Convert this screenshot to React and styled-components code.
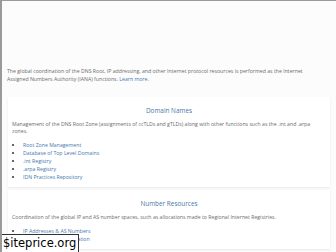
import React from "react";
import styled, { createGlobalStyle } from "styled-components";

const GlobalStyle = createGlobalStyle`
  html, body {
    margin: 0;
    padding: 0;
    background: #fafafa;
  }
  body {
    font-family: "Open Sans", "Liberation Sans", sans-serif;
    color: #6b6b6b;
  }
`;

const Frame = styled.div`
  width: 336px;
  height: 252px;
  box-sizing: border-box;
  border-top: 1px solid #9a9a9a;
  border-left: 2px solid #9a9a9a;
  overflow: hidden;
  position: relative;
  background: #fcfcfc;
`;

const Intro = styled.p`
  margin: 66px 0 0 5px;
  font-size: 5.2px;
  line-height: 8.4px;
  width: 312px;
`;

const Link = styled.a`
  color: #3f78b0;
  text-decoration: none;
`;

const Cards = styled.div`
  margin: 13px 6px 0 6px;
  display: flex;
  flex-direction: column;
  gap: 3px;
`;

const Card = styled.section`
  background: #fff;
  box-shadow: 0 1px 2px rgba(0, 0, 0, 0.08);
  padding: 9px 4px 6px 4px;
`;

const Heading = styled.h2`
  margin: 0 0 6px 0;
  text-align: center;
  font-weight: 400;
  font-size: 6.4px;
  line-height: 9px;
  color: #4a78a8;
`;

const Text = styled.p`
  margin: 0 0 5px 0;
  font-size: 5.2px;
  line-height: 7.6px;
`;

const List = styled.ul`
  margin: 0;
  padding: 0 0 0 11px;
  font-size: 5.2px;
  line-height: 8px;
  li::marker {
    color: #333;
  }
`;

const Item = styled.li`
  color: #3f78b0;
`;

const Badge = styled.div`
  position: absolute;
  left: 0;
  bottom: 0;
  background: #fff;
  border: 1px solid #333;
  border-left: none;
  border-bottom: none;
  padding: 0 2px 0 1px;
  font-family: "DejaVu Sans", sans-serif;
  font-size: 11.5px;
  line-height: 17px;
  color: #000;
`;

export default function App() {
  return (
    <>
      <GlobalStyle />
      <Frame>
        <Intro>
          The global coordination of the DNS Root, IP addressing, and other
          Internet protocol resources is performed as the Internet Assigned
          Numbers Authority (IANA) functions. <Link href="#">Learn more.</Link>
        </Intro>
        <Cards>
          <Card>
            <Heading>Domain Names</Heading>
            <Text>
              Management of the DNS Root Zone (assignments of ccTLDs and gTLDs)
              along with other functions such as the .int and .arpa zones.
            </Text>
            <List>
              <Item>Root Zone Management</Item>
              <Item>Database of Top Level Domains</Item>
              <Item>.int Registry</Item>
              <Item>.arpa Registry</Item>
              <Item>IDN Practices Repository</Item>
            </List>
          </Card>
          <Card>
            <Heading>Number Resources</Heading>
            <Text>
              Coordination of the global IP and AS number spaces, such as
              allocations made to Regional Internet Registries.
            </Text>
            <List>
              <Item>IP Addresses &amp; AS Numbers</Item>
              <Item>Network abuse information</Item>
            </List>
          </Card>
        </Cards>
        <Badge>$iteprice.org</Badge>
      </Frame>
    </>
  );
}
